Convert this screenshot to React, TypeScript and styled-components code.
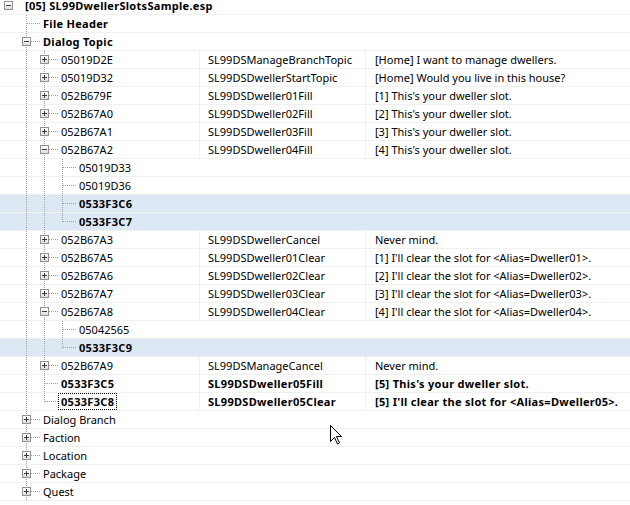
import styled, { createGlobalStyle, css } from "styled-components";

type TreeNode = {
    label: string;
    edid?: string;
    text?: string;
    bold?: boolean;
    marked?: boolean;
    focused?: boolean;
    open?: boolean;
    closed?: boolean;
    more?: boolean;
    kids?: TreeNode[];
};

type FlatRow = {
    node: TreeNode;
    level: number;
    guides: boolean[];
    isLast: boolean;
};

const topic = (label: string, edid: string, text: string, extra: Partial<TreeNode> = {}): TreeNode => ({
    label,
    edid,
    text,
    closed: true,
    ...extra,
});

const plugin: TreeNode = {
    label: "[05] SL99DwellerSlotsSample.esp",
    bold: true,
    open: true,
    more: true,
    kids: [
        {label: "File Header", bold: true},
        {
            label: "Dialog Topic",
            bold: true,
            open: true,
            kids: [
                topic("05019D2E", "SL99DSManageBranchTopic", "[Home] I want to manage dwellers."),
                topic("05019D32", "SL99DSDwellerStartTopic", "[Home] Would you live in this house?"),
                topic("052B679F", "SL99DSDweller01Fill", "[1] This's your dweller slot."),
                topic("052B67A0", "SL99DSDweller02Fill", "[2] This's your dweller slot."),
                topic("052B67A1", "SL99DSDweller03Fill", "[3] This's your dweller slot."),
                topic("052B67A2", "SL99DSDweller04Fill", "[4] This's your dweller slot.", {
                    closed: false,
                    open: true,
                    kids: [
                        {label: "05019D33"},
                        {label: "05019D36"},
                        {label: "0533F3C6", bold: true, marked: true},
                        {label: "0533F3C7", bold: true, marked: true},
                    ],
                }),
                topic("052B67A3", "SL99DSDwellerCancel", "Never mind."),
                topic("052B67A5", "SL99DSDweller01Clear", "[1] I'll clear the slot for <Alias=Dweller01>."),
                topic("052B67A6", "SL99DSDweller02Clear", "[2] I'll clear the slot for <Alias=Dweller02>."),
                topic("052B67A7", "SL99DSDweller03Clear", "[3] I'll clear the slot for <Alias=Dweller03>."),
                topic("052B67A8", "SL99DSDweller04Clear", "[4] I'll clear the slot for <Alias=Dweller04>.", {
                    closed: false,
                    open: true,
                    kids: [
                        {label: "05042565"},
                        {label: "0533F3C9", bold: true, marked: true},
                    ],
                }),
                topic("052B67A9", "SL99DSManageCancel", "Never mind."),
                topic("0533F3C5", "SL99DSDweller05Fill", "[5] This's your dweller slot.", {closed: false, bold: true}),
                topic("0533F3C8", "SL99DSDweller05Clear", "[5] I'll clear the slot for <Alias=Dweller05>.", {
                    closed: false,
                    bold: true,
                    focused: true,
                }),
            ],
        },
        {label: "Dialog Branch", closed: true},
        {label: "Faction", closed: true},
        {label: "Location", closed: true},
        {label: "Package", closed: true},
        {label: "Quest", closed: true},
    ],
};

const flatten = (node: TreeNode, level: number, guides: boolean[], isLast: boolean, out: FlatRow[]) => {
    out.push({node, level, guides, isLast});
    if (!node.open || !node.kids) return out;
    const childGuides = [...guides, level === 0 ? false : !isLast];
    node.kids.forEach((kid, i) => {
        const last = i === node.kids!.length - 1 && !node.more;
        flatten(kid, level + 1, childGuides, last, out);
    });
    return out;
};

const rows = flatten(plugin, 0, [], true, []);

const GlobalStyle = createGlobalStyle`
  html, body {
    margin: 0;
    padding: 0;
    background: #fff;
  }

  body {
    font-family: "Segoe UI", "Noto Sans", sans-serif;
    font-size: 11px;
    color: #000;
  }
`;

export default function App() {
    return (
        <>
            <GlobalStyle/>
            <View>
                <List>
                    {rows.map((r, i) => (
                        <Row key={i} $marked={r.node.marked}>
                            <TreeCell $span={!r.node.edid}>
                                {r.guides.map((g, j) => (
                                    <Guide key={j} $line={g}/>
                                ))}
                                <Joint $root={r.level === 0} $last={r.isLast}>
                                    {(r.node.open || r.node.closed) && (
                                        <Expander>
                                            <Sign $plus={!r.node.open}/>
                                        </Expander>
                                    )}
                                </Joint>
                                <Label $bold={r.node.bold} $focused={r.node.focused}>
                                    {r.node.label}
                                </Label>
                            </TreeCell>
                            {r.node.edid && (
                                <>
                                    <Cell $bold={r.node.bold} $pad={8} $border>{r.node.edid}</Cell>
                                    <Cell $bold={r.node.bold} $pad={9}>{r.node.text}</Cell>
                                </>
                            )}
                        </Row>
                    ))}
                </List>
                <Pointer viewBox="0 0 13 20" width="13" height="20">
                    <path d="M0.5 0.5 L0.5 16.5 L4.5 12.5 L7.5 19 L9.5 18 L6.5 11.5 L11.5 11.5 Z"
                          fill="#fff" stroke="#000" strokeWidth="1" strokeLinejoin="miter"/>
                </Pointer>
            </View>
        </>
    );
}

const View = styled.div`
  position: relative;
  width: 630px;
  height: 505px;
  overflow: hidden;
  background: #fff;
`;

// the list is scrolled a few pixels down, so the first row is cut at the top
const List = styled.div`
  display: flex;
  flex-direction: column;
  margin-top: -3px;
`;

const Row = styled.div<{ $marked?: boolean }>`
  display: grid;
  grid-template-columns: 200px 166px 1fr;
  height: 18px;
  box-sizing: border-box;
  border-bottom: 1px solid #f0f0f0;
  background: ${p => (p.$marked ? "#dde8f5" : "transparent")};
`;

const dotsV = css`
  background-image: linear-gradient(to bottom, #a0a0a0 50%, transparent 50%);
  background-size: 1px 2px;
  background-repeat: repeat-y;
`;

const boldText = css`
  font-weight: 700;
  letter-spacing: 0.3px;
`;

const TreeCell = styled.div<{ $span?: boolean }>`
  display: flex;
  align-items: stretch;
  min-width: 0;
  white-space: nowrap;
  ${p =>
    p.$span
        ? css`grid-column: 1 / -1;`
        : css`border-right: 1px solid #f0f0f0;`}
`;

const Guide = styled.div<{ $line: boolean }>`
  position: relative;
  flex: 0 0 18px;
  margin-bottom: -1px;

  &::before {
    content: "";
    display: ${p => (p.$line ? "block" : "none")};
    position: absolute;
    left: 8px;
    top: 0;
    bottom: 0;
    width: 1px;
    ${dotsV};
  }
`;

const Joint = styled.div<{ $root: boolean; $last: boolean }>`
  position: relative;
  flex: 0 0 22px;

  &::before {
    content: "";
    display: ${p => (p.$root ? "none" : "block")};
    position: absolute;
    left: 8px;
    top: 0;
    height: ${p => (p.$last ? "9px" : "18px")};
    width: 1px;
    ${dotsV};
  }

  &::after {
    content: "";
    display: ${p => (p.$root ? "none" : "block")};
    position: absolute;
    left: 9px;
    top: 8px;
    width: 13px;
    height: 1px;
    background-image: linear-gradient(to right, #a0a0a0 50%, transparent 50%);
    background-size: 2px 1px;
    background-repeat: repeat-x;
  }
`;

const Expander = styled.span`
  position: absolute;
  z-index: 1;
  left: 4px;
  top: 4px;
  width: 9px;
  height: 9px;
  box-sizing: border-box;
  border: 1px solid #919191;
  background: linear-gradient(to bottom, #ffffff 0%, #f2f2f2 50%, #dcdcdc 100%);
`;

const Sign = styled.span<{ $plus: boolean }>`
  position: absolute;
  left: 1px;
  top: 3px;
  width: 5px;
  height: 1px;
  background: #3a3a3a;

  &::after {
    content: "";
    display: ${p => (p.$plus ? "block" : "none")};
    position: absolute;
    left: 2px;
    top: -2px;
    width: 1px;
    height: 5px;
    background: #3a3a3a;
  }
`;

const Label = styled.span<{ $bold?: boolean; $focused?: boolean }>`
  display: flex;
  align-items: center;
  padding: 0 3px;
  ${p => p.$bold && boldText}
  ${p =>
    p.$focused &&
    css`
      outline: 1px dotted #000;
      outline-offset: -1px;
    `}
`;

const Cell = styled.div<{ $bold?: boolean; $pad: number; $border?: boolean }>`
  display: flex;
  align-items: center;
  min-width: 0;
  padding-left: ${p => p.$pad}px;
  white-space: nowrap;
  overflow: hidden;
  border-right: ${p => (p.$border ? "1px solid #f0f0f0" : "none")};
  ${p => p.$bold && boldText}
`;

const Pointer = styled.svg`
  position: absolute;
  left: 330px;
  top: 425px;
  pointer-events: none;
`;
